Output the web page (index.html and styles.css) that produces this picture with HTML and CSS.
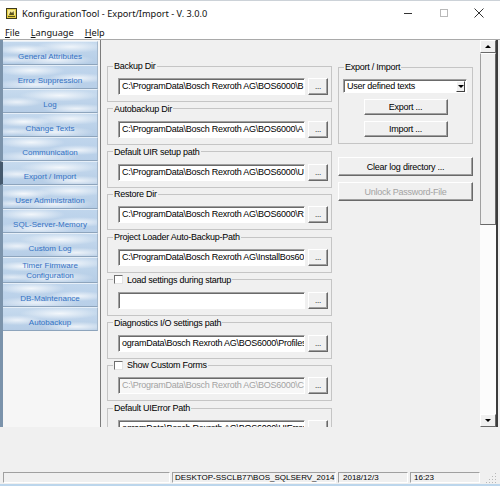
FILE: index.html
```html
<!DOCTYPE html>
<html lang="de">
<head>
<meta charset="utf-8">
<title>KonfigurationTool - Export/Import - V. 3.0.0</title>
<link rel="stylesheet" href="styles.css">
</head>
<body>
<div class="window">
  <header class="titlebar">
    <svg class="app-icon" width="11" height="11" viewBox="0 0 11 11">
      <rect x="0.5" y="0.5" width="10" height="10" fill="#e6cf45" stroke="#3e3a1c"/>
      <rect x="2" y="2" width="7" height="5" fill="#f6ea9c"/>
      <path d="M3 7 L4.5 3.5 L6 5 L7.5 3 L8 7 Z" fill="#5a5320"/>
      <rect x="2" y="8" width="7" height="1" fill="#5a5320"/>
    </svg>
    <span class="title">KonfigurationTool - Export/Import - V. 3.0.0</span>
    <div class="controls">
      <span class="ctl"><span class="ctl-min"></span></span>
      <span class="ctl"><span class="ctl-max"></span></span>
      <span class="ctl">
        <svg width="10" height="10" viewBox="0 0 10 10"><path d="M0.5 0.5 L9.5 9.5 M9.5 0.5 L0.5 9.5" stroke="#333" stroke-width="1" fill="none"/></svg>
      </span>
    </div>
  </header>

  <nav class="menubar">
    <span class="menu-item"><u>F</u>ile</span>
    <span class="menu-item"><u>L</u>anguage</span>
    <span class="menu-item"><u>H</u>elp</span>
  </nav>

  <div class="body">
    <aside class="nav">
      <div class="tab">General Attributes</div>
      <div class="tab">Error Suppression</div>
      <div class="tab">Log</div>
      <div class="tab">Change Texts</div>
      <div class="tab">Communication</div>
      <div class="tab selected">Export / Import</div>
      <div class="tab">User Administration</div>
      <div class="tab">SQL-Server-Memory</div>
      <div class="tab">Custom Log</div>
      <div class="tab two-line">Timer Firmware<br>Configuration</div>
      <div class="tab">DB-Maintenance</div>
      <div class="tab">Autobackup</div>
    </aside>

    <main class="panel">
      <div class="content">
        <div class="col-left">
          <fieldset class="group">
            <legend>Backup Dir</legend>
            <div class="row"><div class="textbox">C:\ProgramData\Bosch Rexroth AG\BOS6000\B</div><div class="btn dots">...</div></div>
          </fieldset>
          <fieldset class="group">
            <legend>Autobackup Dir</legend>
            <div class="row"><div class="textbox">C:\ProgramData\Bosch Rexroth AG\BOS6000\A</div><div class="btn dots">...</div></div>
          </fieldset>
          <fieldset class="group">
            <legend>Default UIR setup path</legend>
            <div class="row"><div class="textbox">C:\ProgramData\Bosch Rexroth AG\BOS6000\U</div><div class="btn dots">...</div></div>
          </fieldset>
          <fieldset class="group">
            <legend>Restore Dir</legend>
            <div class="row"><div class="textbox">C:\ProgramData\Bosch Rexroth AG\BOS6000\R</div><div class="btn dots">...</div></div>
          </fieldset>
          <fieldset class="group">
            <legend>Project Loader Auto-Backup-Path</legend>
            <div class="row"><div class="textbox">C:\ProgramData\Bosch Rexroth AG\InstallBos60</div><div class="btn dots">...</div></div>
          </fieldset>
          <fieldset class="group">
            <legend><span class="check"></span>Load settings during startup</legend>
            <div class="row"><div class="textbox"></div><div class="btn dots">...</div></div>
          </fieldset>
          <fieldset class="group">
            <legend>Diagnostics I/O settings path</legend>
            <div class="row"><div class="textbox">ogramData\Bosch Rexroth AG\BOS6000\Profiles</div><div class="btn dots">...</div></div>
          </fieldset>
          <fieldset class="group">
            <legend><span class="check"></span>Show Custom Forms</legend>
            <div class="row"><div class="textbox disabled">C:\ProgramData\Bosch Rexroth AG\BOS6000\C</div><div class="btn dots">...</div></div>
          </fieldset>
          <fieldset class="group">
            <legend>Default UIError Path</legend>
            <div class="row"><div class="textbox">ogramData\Bosch Rexroth AG\BOS6000\UIError</div><div class="btn dots">...</div></div>
          </fieldset>
        </div>

        <div class="col-right">
          <fieldset class="group export">
            <legend>Export / Import</legend>
            <div class="combo">
              <span class="combo-text">User defined texts</span>
              <span class="combo-btn"><span class="arrow-down"></span></span>
            </div>
            <div class="btn action">Export ...</div>
            <div class="btn action">Import ...</div>
          </fieldset>
          <div class="btn wide">Clear log directory ...</div>
          <div class="btn wide disabled-text">Unlock Password-File</div>
        </div>
      </div>

      <div class="vscroll">
        <div class="sb-btn"><span class="arrow-up"></span></div>
        <div class="sb-thumb"></div>
        <div class="sb-track"></div>
        <div class="sb-btn"><span class="arrow-down"></span></div>
      </div>
    </main>
  </div>

  <div class="spacer"></div>

  <footer class="statusbar">
    <div class="sp sp1"></div>
    <div class="sp sp2">DESKTOP-SSCLB77\BOS_SQLSERV_2014</div>
    <div class="sp sp3">2018/12/3</div>
    <div class="sp sp4">16:23</div>
    <svg class="grip" width="11" height="11" viewBox="0 0 11 11">
      <g fill="#b8b8b8">
        <rect x="9" y="1" width="1" height="1"/>
        <rect x="6" y="4" width="1" height="1"/><rect x="9" y="4" width="1" height="1"/>
        <rect x="3" y="7" width="1" height="1"/><rect x="6" y="7" width="1" height="1"/><rect x="9" y="7" width="1" height="1"/>
        <rect x="0" y="10" width="1" height="1"/><rect x="3" y="10" width="1" height="1"/><rect x="6" y="10" width="1" height="1"/><rect x="9" y="10" width="1" height="1"/>
      </g>
    </svg>
  </footer>
</div>
</body>
</html>
```

FILE: styles.css
```css
* { box-sizing: border-box; }
html, body { margin: 0; padding: 0; }
body {
  width: 500px;
  height: 486px;
  overflow: hidden;
  background: #f0f0f0;
  font-family: "Liberation Sans", Arial, sans-serif;
  color: #000;
}

.window {
  width: 500px;
  height: 486px;
  display: flex;
  flex-direction: column;
  background: #f0f0f0;
  border-bottom: 2px solid #bcd6ec;
}

/* title bar */
.titlebar {
  flex: none;
  height: 25px;
  display: flex;
  align-items: center;
  background: #fff;
  padding-left: 6px;
  border-top: 1px solid #ccd2d8;
}
.app-icon { flex: none; display: block; }
.title {
  margin-left: 5px;
  font-family: "Noto Sans", "Liberation Sans", sans-serif;
  font-size: 9.2px;
  color: #111;
  white-space: nowrap;
}
.controls {
  margin-left: auto;
  display: flex;
  height: 24px;
  padding-right: 3px;
}
.ctl {
  width: 35.5px;
  display: flex;
  align-items: center;
  justify-content: center;
}
.ctl-min { width: 8px; height: 1px; background: #333; }
.ctl-max { width: 8px; height: 8px; border: 1px solid #b9b9b9; }

/* menu bar */
.menubar {
  flex: none;
  height: 15px;
  display: flex;
  align-items: center;
  background: #fff;
  border-bottom: 1px solid #a9a9a9;
  font-family: "Noto Sans", "Liberation Sans", sans-serif;
  font-size: 9.2px;
  color: #111;
}
.menu-item { padding: 0 5.5px; }
.menu-item:first-child { padding-left: 5px; }

/* body */
.body {
  flex: none;
  height: 387px;
  display: flex;
}

.nav {
  flex: none;
  width: 100px;
  display: flex;
  flex-direction: column;
  padding: 1px 2px 0 3px;
  background: linear-gradient(to right, #7b93ab 0, #7b93ab 3px, #f6f6f6 3px);
}
.tab {
  flex: none;
  height: 24px;
  display: flex;
  align-items: center;
  justify-content: center;
  text-align: center;
  padding-top: 8px;
  font-size: 8px;
  line-height: 10px;
  color: #3472c4;
  white-space: nowrap;
  border-top: 1px solid #e6eff8;
  border-bottom: 1px solid #8da4bc;
  border-right: 1px solid #a5b8cc;
  background:
    radial-gradient(28px 5px at 22% 35%, rgba(255,255,255,.85), rgba(255,255,255,0)),
    radial-gradient(36px 6px at 72% 22%, rgba(255,255,255,.75), rgba(255,255,255,0)),
    radial-gradient(40px 6px at 55% 82%, rgba(255,255,255,.75), rgba(255,255,255,0)),
    radial-gradient(22px 4px at 10% 80%, rgba(255,255,255,.6), rgba(255,255,255,0)),
    linear-gradient(#c3d8ed, #b5cde6);
}
.tab:nth-child(3n+2) {
  background:
    radial-gradient(34px 6px at 30% 20%, rgba(255,255,255,.8), rgba(255,255,255,0)),
    radial-gradient(30px 5px at 80% 55%, rgba(255,255,255,.75), rgba(255,255,255,0)),
    radial-gradient(44px 6px at 35% 85%, rgba(255,255,255,.7), rgba(255,255,255,0)),
    linear-gradient(#bfd5ec, #b8cfe8);
}
.tab:nth-child(3n) {
  background:
    radial-gradient(40px 6px at 60% 25%, rgba(255,255,255,.8), rgba(255,255,255,0)),
    radial-gradient(26px 5px at 15% 55%, rgba(255,255,255,.7), rgba(255,255,255,0)),
    radial-gradient(34px 5px at 78% 85%, rgba(255,255,255,.75), rgba(255,255,255,0)),
    linear-gradient(#c6daee, #b6cde6);
}
.tab.selected {
  margin-left: -3px;
  border-left: 3px solid #45596d;
}
.tab.two-line {
  padding-top: 2px;
  height: 26px;
}

/* main panel */
.panel {
  flex: 1;
  display: flex;
  border-left: 1px solid #7c7c7c;
  border-right: 2px solid #3c3c3c;
  margin-right: 2px;
  overflow: hidden;
}
.content {
  flex: 1;
  overflow: hidden;
  display: flex;
  align-items: flex-start;
  gap: 6px;
  padding: 20px 0 0 6px;
  font-size: 9px;
  letter-spacing: -0.25px;
}
.col-left {
  flex: none;
  width: 225px;
  display: flex;
  flex-direction: column;
  gap: 0.75px;
}
.col-right {
  flex: none;
  width: 135px;
  margin-top: 1px;
  display: flex;
  flex-direction: column;
}

.group {
  margin: 0;
  min-width: 0;
  padding: 6px 3px 6px 10px;
  border: 1px solid #c5c5c5;
}
.group legend {
  margin-left: -5px;
  padding: 0 1px;
  font-size: 9px;
  line-height: 12px;
  display: flex;
  align-items: center;
}
.check {
  display: inline-block;
  width: 9px;
  height: 9px;
  margin-right: 4px;
  background: #fff;
  border: 1px solid;
  border-color: #6e6e6e #e3e3e3 #e3e3e3 #6e6e6e;
}

.row {
  display: flex;
  gap: 3px;
}
.textbox {
  width: 187px;
  height: 17px;
  background: #fff;
  border: 1px solid;
  border-color: #a0a0a0 #fff #fff #a0a0a0;
  box-shadow: inset 1px 1px 0 #6a6a6a;
  padding-left: 3px;
  line-height: 15px;
  white-space: nowrap;
  overflow: hidden;
}
.textbox.disabled {
  background: #f7f7f7;
  color: #a3a3a3;
}

.btn {
  background: #f0f0f0;
  border: 1px solid;
  border-color: #fff #696969 #696969 #fff;
  box-shadow: inset -1px -1px 0 #a0a0a0;
  display: flex;
  align-items: center;
  justify-content: center;
  white-space: nowrap;
}
.btn.dots {
  width: 20px;
  height: 17px;
  font-size: 8px;
  align-items: flex-end;
  padding-bottom: 3px;
}

.export { padding: 6px 4px 6px 4px; }
.export legend { margin-left: 1px; }
.combo {
  width: 124px;
  height: 14px;
  background: #fff;
  border: 1px solid;
  border-color: #a0a0a0 #fff #fff #a0a0a0;
  box-shadow: inset 1px 1px 0 #6a6a6a;
  display: flex;
  align-items: center;
  padding-left: 3px;
}
.combo-text { white-space: nowrap; }
.combo-btn {
  margin-left: auto;
  margin-right: 1px;
  width: 9px;
  height: 11px;
  background: #f0f0f0;
  border: 1px solid;
  border-color: #fff #404040 #404040 #fff;
  display: flex;
  align-items: center;
  justify-content: center;
}
.btn.action {
  width: 84px;
  height: 16px;
  margin: 6px auto 0;
}
.btn.wide {
  width: 135px;
  height: 19px;
  margin-top: 13px;
}
.btn.wide + .btn.wide { margin-top: 6px; }
.disabled-text { color: #a3a3a3; }

.arrow-down {
  width: 0;
  height: 0;
  border-left: 3px solid transparent;
  border-right: 3px solid transparent;
  border-top: 3px solid #000;
}
.arrow-up {
  width: 0;
  height: 0;
  border-left: 3px solid transparent;
  border-right: 3px solid transparent;
  border-bottom: 3px solid #000;
}

/* vertical scrollbar */
.vscroll {
  flex: none;
  width: 16px;
  display: flex;
  flex-direction: column;
  background: #fcfcfc;
}
.sb-btn {
  flex: none;
  height: 13px;
  background: #f0f0f0;
  border: 1px solid;
  border-color: #fff #696969 #696969 #fff;
  display: flex;
  align-items: center;
  justify-content: center;
}
.sb-thumb {
  flex: none;
  height: 172px;
  background: #f0f0f0;
  border: 1px solid;
  border-color: #fff #696969 #696969 #a0a0a0;
}
.sb-track { flex: 1; }

.spacer {
  flex: none;
  height: 43px;
}

/* status bar */
.statusbar {
  flex: none;
  height: 14px;
  display: flex;
  gap: 2px;
  padding: 2px 0 1px 3px;
}
.sp {
  flex: none;
  border: 1px solid;
  border-color: #a0a0a0 #fff #fff #a0a0a0;
  font-size: 8px;
  line-height: 9px;
  padding-left: 2px;
  white-space: nowrap;
  overflow: hidden;
}
.sp1 { width: 167px; }
.sp2 { width: 164px; }
.sp3 { width: 70px; padding-left: 4px; }
.sp4 { width: 70px; padding-left: 3px; }
.grip {
  margin-left: auto;
  margin-right: 3px;
  align-self: flex-end;
}
```
